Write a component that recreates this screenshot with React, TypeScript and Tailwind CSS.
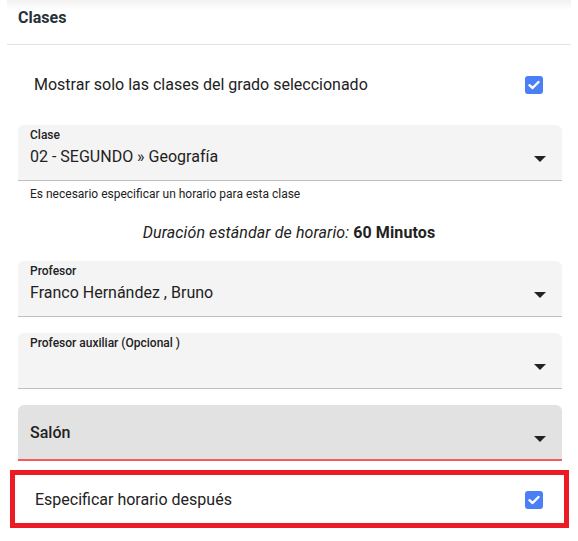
import React from "react";

function Check() {
  return (
    <div className="w-[18px] h-[18px] rounded-[3px] bg-[#4b7ff6] flex items-center justify-center shrink-0">
      <svg width="12" height="10" viewBox="0 0 12 10" fill="none">
        <path d="M1.5 5.2 L4.6 8 L10.5 2" stroke="white" strokeWidth="2.4" strokeLinecap="round" strokeLinejoin="round" />
      </svg>
    </div>
  );
}

function Arrow() {
  return (
    <svg width="12" height="6" viewBox="0 0 12 6">
      <polygon points="0,0 12,0 6,6" fill="#222" />
    </svg>
  );
}

function Field({ label, value }: { label: string; value?: string }) {
  return (
    <div className="ml-[18px] mr-[16px] h-[56px] rounded-t-[6px] bg-[#f4f4f4] border-b border-[#bfbfbf] flex">
      <div className="flex-1 pl-[12px]">
        <div className="pt-[2px] text-[12px] leading-[16px] font-medium text-[#222]">{label}</div>
        {value && <div className="mt-[2px] text-[16px] leading-[24px] text-[#222]">{value}</div>}
      </div>
      <div className="pt-[31px] pr-[16px]">
        <Arrow />
      </div>
    </div>
  );
}

export default function App() {
  return (
    <div className="w-[578px] h-[541px] bg-white overflow-hidden font-[Roboto] text-[#222]">
      <div className="mx-[7px] h-[45px] border-b border-[#e2e2e2] bg-[linear-gradient(to_bottom,#f1f1f1,#ffffff_10px)] pl-[11px] pt-[6px]">
        <div className="text-[16px] leading-[24px] font-bold text-[#263238]">Clases</div>
      </div>

      <div className="h-[80px] flex items-center justify-between pl-[34px] pr-[35px]">
        <span className="text-[16px] leading-[24px]">Mostrar solo las clases del grado seleccionado</span>
        <Check />
      </div>

      <Field label="Clase" value="02 - SEGUNDO » Geografía" />
      <div className="mt-[5px] pl-[30px] text-[12px] leading-[16px]">Es necesario especificar un horario para esta clase</div>

      <div className="mt-[19px] text-center text-[16px] leading-[24px] tracking-[0.1px]">
        <span className="italic">Duración estándar de horario: </span>
        <span className="font-bold">60 Minutos</span>
      </div>

      <div className="mt-[16px]">
        <Field label="Profesor" value="Franco Hernández , Bruno" />
      </div>
      <div className="mt-[16px]">
        <Field label="Profesor auxiliar (Opcional )" />
      </div>

      <div className="mt-[16px] ml-[18px] mr-[16px] h-[56px] rounded-t-[6px] bg-[#e2e2e2] border-b-2 border-[#f45b5b] flex">
        <div className="flex-1 pl-[12px] pt-[16px] text-[16px] leading-[24px] font-medium">Salón</div>
        <div className="pt-[31px] pr-[16px]">
          <Arrow />
        </div>
      </div>

      <div className="mt-[9px] ml-[10px] mr-[9px] h-[58px] border-[5px] border-[#ed1c24] flex items-center justify-between pl-[20px] pr-[21px] pt-[2px]">
        <span className="text-[16px] leading-[24px]">Especificar horario después</span>
        <Check />
      </div>
    </div>
  );
}
